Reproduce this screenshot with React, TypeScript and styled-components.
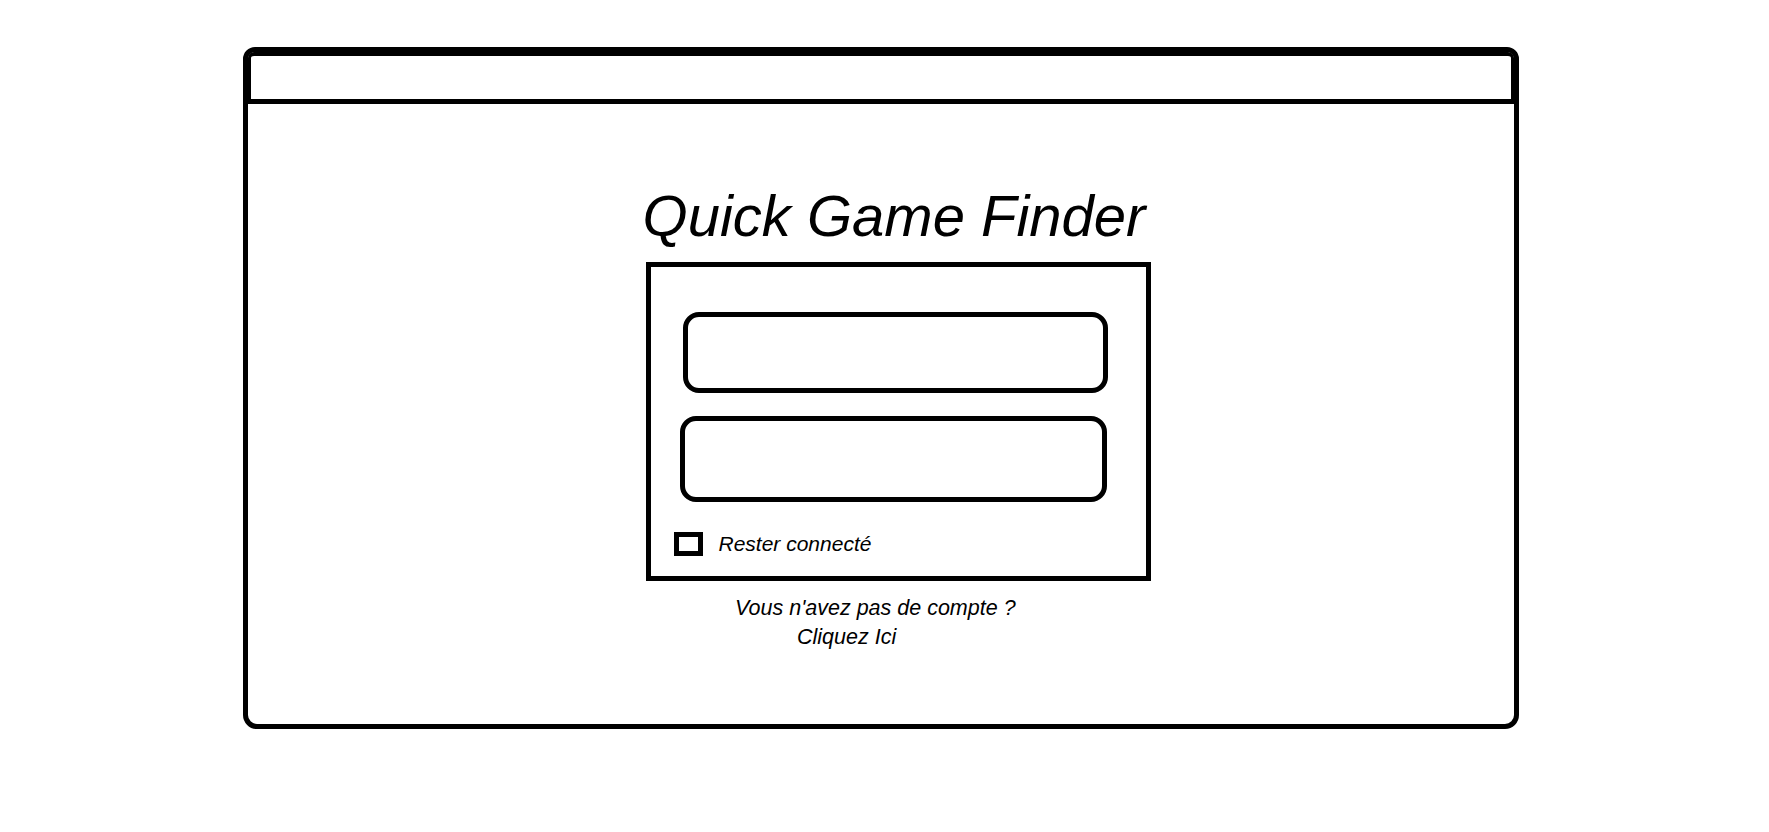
import React from 'react';
import styled, { createGlobalStyle } from 'styled-components';

const GlobalStyle = createGlobalStyle`
  html, body {
    margin: 0;
    padding: 0;
    background: #ffffff;
    font-family: 'Liberation Sans', Arial, sans-serif;
    color: #000000;
  }
`;

const Page = styled.div`
  width: 1769px;
  height: 832px;
  box-sizing: border-box;
  padding: 47px 0 0 243px;
`;

const Window = styled.div`
  width: 1276px;
  height: 682px;
  box-sizing: border-box;
  border: 5px solid #000;
  border-radius: 12px 12px 14px 14px;
  display: flex;
  flex-direction: column;
`;

const TitleBar = styled.div`
  height: 52px;
  box-sizing: border-box;
  border-style: solid;
  border-color: #000;
  border-width: 4px 3px 5px 3px;
  border-radius: 6px 6px 0 0;
  flex-shrink: 0;
`;

const Content = styled.main`
  flex: 1;
  display: flex;
  flex-direction: column;
  align-items: center;
  padding-top: 77px;
`;

const Title = styled.h1`
  margin: 0 0 0 26px;
  font-family: 'Liberation Sans', sans-serif;
  font-style: italic;
  font-weight: 400;
  font-size: 58px;
  line-height: 70px;
`;

const LoginBox = styled.form`
  margin: 11px 0 0 34px;
  width: 505px;
  height: 319px;
  box-sizing: border-box;
  border: 5px solid #000;
  padding: 45px 0 0 0;
  display: flex;
  flex-direction: column;
`;

const Field = styled.input<{ $w: number; $h: number; $left: number }>`
  display: block;
  width: ${(p) => p.$w}px;
  height: ${(p) => p.$h}px;
  margin-left: ${(p) => p.$left}px;
  box-sizing: border-box;
  border: 5px solid #000;
  border-radius: 16px;
  background: #fff;
  outline: none;
  padding: 0 16px;
  font-family: 'Liberation Sans', sans-serif;
  font-size: 20px;
`;

const FieldGap = styled.div`
  height: 23px;
`;

const RememberRow = styled.label`
  display: flex;
  align-items: center;
  gap: 16px;
  margin: 30px 0 0 23px;
  font-style: italic;
  font-size: 21px;
  cursor: pointer;
`;

const CheckBox = styled.span`
  width: 29px;
  height: 24px;
  box-sizing: border-box;
  border: 5px solid #000;
  display: inline-block;
`;

const SignupText = styled.div`
  align-self: flex-start;
  margin: 13px 0 0 487px;
  font-style: italic;
  font-size: 21.5px;
  line-height: 29px;
`;

const SignupLink = styled.a`
  display: block;
  margin-left: 62px;
  color: #000;
  text-decoration: none;
  cursor: pointer;
`;

export default function App() {
  return (
    <>
      <GlobalStyle />
      <Page>
        <Window>
          <TitleBar />
          <Content>
            <Title>Quick Game Finder</Title>
            <LoginBox onSubmit={(e) => e.preventDefault()}>
              <Field $w={425} $h={81} $left={32} type="text" aria-label="Identifiant" />
              <FieldGap />
              <Field $w={427} $h={86} $left={29} type="password" aria-label="Mot de passe" />
              <RememberRow>
                <CheckBox />
                Rester connecté
              </RememberRow>
            </LoginBox>
            <SignupText>
              Vous n'avez pas de compte ?
              <SignupLink>Cliquez Ici</SignupLink>
            </SignupText>
          </Content>
        </Window>
      </Page>
    </>
  );
}
